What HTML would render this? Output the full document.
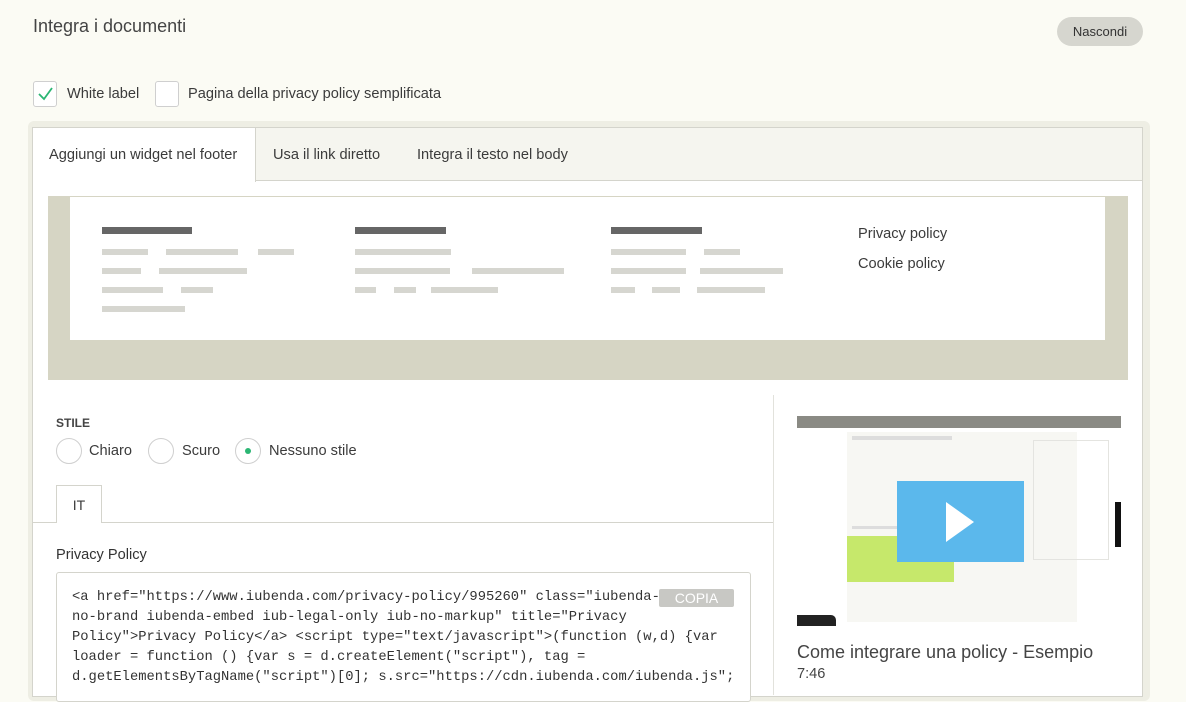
<!DOCTYPE html>
<html><head><meta charset="utf-8"><style>
*{box-sizing:border-box;margin:0;padding:0}
body{width:1186px;height:688px;overflow:hidden;background:#fbfbf4;font-family:"Liberation Sans",sans-serif;color:#3b3b3b;position:relative}
.a{position:absolute}
.bar{position:absolute;height:6px;background:#d6d6d0}
.bar.d{background:#666;height:7px}
.cb{position:absolute;width:24px;height:26px;border:1px solid #cfcfcf;border-radius:3px;background:#fff}
.rd{position:absolute;width:26px;height:26px;border:1px solid #cfcfcf;border-radius:50%;background:#fff}
.code{font-family:"Liberation Mono",monospace;font-size:13.8px;line-height:20px;color:#333;white-space:nowrap}
.t{font-size:14.6px}
</style></head><body>
<div class="a" style="left:33px;top:16px;font-size:18px;color:#444">Integra i documenti</div>
<div class="a" style="left:1057px;top:17px;width:86px;height:29px;border-radius:15px;background:#d6d6cf;font-size:13px;text-align:center;line-height:29px;color:#333">Nascondi</div>
<div class="cb" style="left:33px;top:81px"><svg width="22" height="24" style="position:absolute;left:0;top:0"><path d="M5 12 L10 17 L18 6" fill="none" stroke="#2bb673" stroke-width="1.8"/></svg></div>
<div class="a t" style="left:67px;top:86px">White label</div>
<div class="cb" style="left:155px;top:81px"></div>
<div class="a t" style="left:188px;top:86px">Pagina della privacy policy semplificata</div>
<div class="a" style="left:28px;top:121px;width:1122px;height:580px;border-radius:6px;background:#eeeee4"></div>
<div class="a" style="left:32px;top:127px;width:1111px;height:570px;border:1px solid #d4d4cc;background:#fff"></div>
<div class="a" style="left:33px;top:128px;width:1109px;height:53px;background:#f5f5ef;border-bottom:1px solid #d4d4cc"></div>
<div class="a" style="left:33px;top:128px;width:223px;height:54px;background:#fff;border-right:1px solid #d4d4cc"></div>
<div class="a t" style="left:49px;top:147px">Aggiungi un widget nel footer</div>
<div class="a t" style="left:273px;top:147px">Usa il link diretto</div>
<div class="a t" style="left:417px;top:147px">Integra il testo nel body</div>
<div class="a" style="left:48px;top:196px;width:1080px;height:184px;background:#d6d5c4"></div>
<div class="a" style="left:70px;top:197px;width:1035px;height:143px;background:#fff"></div>
<div class="bar d" style="left:102px;top:227px;width:90px"></div>
<div class="bar" style="left:102px;top:249px;width:46px"></div><div class="bar" style="left:166px;top:249px;width:72px"></div><div class="bar" style="left:258px;top:249px;width:36px"></div>
<div class="bar" style="left:102px;top:268px;width:39px"></div><div class="bar" style="left:159px;top:268px;width:88px"></div>
<div class="bar" style="left:102px;top:287px;width:61px"></div><div class="bar" style="left:181px;top:287px;width:32px"></div>
<div class="bar" style="left:102px;top:306px;width:83px"></div>
<div class="bar d" style="left:355px;top:227px;width:91px"></div>
<div class="bar" style="left:355px;top:249px;width:96px"></div>
<div class="bar" style="left:355px;top:268px;width:95px"></div><div class="bar" style="left:472px;top:268px;width:92px"></div>
<div class="bar" style="left:355px;top:287px;width:21px"></div><div class="bar" style="left:394px;top:287px;width:22px"></div><div class="bar" style="left:431px;top:287px;width:67px"></div>
<div class="bar d" style="left:611px;top:227px;width:91px"></div>
<div class="bar" style="left:611px;top:249px;width:75px"></div><div class="bar" style="left:704px;top:249px;width:36px"></div>
<div class="bar" style="left:611px;top:268px;width:75px"></div><div class="bar" style="left:700px;top:268px;width:83px"></div>
<div class="bar" style="left:611px;top:287px;width:24px"></div><div class="bar" style="left:652px;top:287px;width:28px"></div><div class="bar" style="left:697px;top:287px;width:68px"></div>
<div class="a t" style="left:858px;top:226px">Privacy policy</div>
<div class="a t" style="left:858px;top:256px">Cookie policy</div>
<div class="a" style="left:773px;top:395px;width:1px;height:300px;background:#e2e2dc"></div>
<div class="a" style="left:56px;top:416px;font-size:12px;font-weight:bold;color:#444">STILE</div>
<div class="rd" style="left:56px;top:438px"></div><div class="a t" style="left:89px;top:443px">Chiaro</div>
<div class="rd" style="left:148px;top:438px"></div><div class="a t" style="left:182px;top:443px">Scuro</div>
<div class="rd" style="left:235px;top:438px"><div class="a" style="left:9px;top:9px;width:6px;height:6px;border-radius:50%;background:#2bb673"></div></div>
<div class="a t" style="left:269px;top:443px">Nessuno stile</div>
<div class="a" style="left:33px;top:522px;width:740px;height:1px;background:#d4d4cc"></div>
<div class="a" style="left:56px;top:485px;width:46px;height:38px;border:1px solid #d4d4cc;border-bottom:none;background:#fff;font-size:14px;text-align:center;line-height:38px">IT</div>
<div class="a t" style="left:56px;top:547px;color:#333">Privacy Policy</div>
<div class="a" style="left:56px;top:572px;width:695px;height:130px;border:1px solid #d4d4cc;border-radius:3px;background:#fff"></div>
<div class="a code" style="left:72px;top:588px;width:670px">&lt;a href="https://www.iubenda.com/privacy-policy/995260" class="iubenda-<br>no-brand iubenda-embed iub-legal-only iub-no-markup" title="Privacy<br>Policy"&gt;Privacy Policy&lt;/a&gt; &lt;script type="text/javascript"&gt;(function (w,d) {var<br>loader = function () {var s = d.createElement("script"), tag =<br>d.getElementsByTagName("script")[0]; s.src="https://cdn.iubenda.com/iubenda.js";</div>
<div class="a" style="left:659px;top:589px;width:75px;height:18px;background:#c8c8c4;border-radius:2px;color:#fff;font-size:14px;text-align:center;line-height:18px">COPIA</div>
<div class="a" style="left:797px;top:416px;width:324px;height:210px;background:#fff;overflow:hidden">
 <div class="a" style="left:0;top:0;width:324px;height:12px;background:#8a8a84"></div>
 <div class="a" style="left:50px;top:16px;width:230px;height:190px;background:#f7f7f3"></div>
 <div class="a" style="left:55px;top:20px;width:100px;height:4px;background:#ddd"></div>
 <div class="a" style="left:55px;top:110px;width:60px;height:3px;background:#ddd"></div>
 <div class="a" style="left:236px;top:24px;width:76px;height:120px;border:1px solid #e4e4e0"></div>
 <div class="a" style="left:50px;top:120px;width:107px;height:46px;background:#c6e86b"></div>
 <div class="a" style="left:100px;top:65px;width:127px;height:81px;background:#5bb8ec"></div>
 <svg class="a" style="left:147px;top:86px" width="40" height="40"><path d="M2 0 L30 20 L2 40 Z" fill="#fff"/></svg>
 <div class="a" style="left:318px;top:86px;width:6px;height:45px;background:#111"></div>
 <div class="a" style="left:0;top:199px;width:39px;height:11px;background:#222;border-radius:0 5px 0 0"></div>
</div>
<div class="a" style="left:797px;top:642px;font-size:18px;color:#444">Come integrare una policy - Esempio</div>
<div class="a" style="left:797px;top:666px;font-size:14.6px;color:#444">7:46</div>
</body></html>
